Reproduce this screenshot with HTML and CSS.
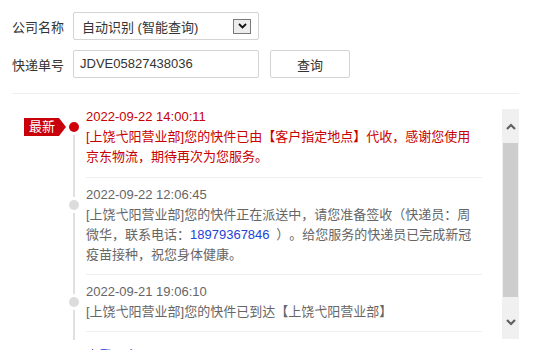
FILE: index.html
```html
<!DOCTYPE html>
<html lang="zh">
<head>
<meta charset="utf-8">
<link rel="stylesheet" href="styles.css">
</head>
<body>
<div class="page">
  <div class="form">
    <div class="row">
      <span class="label">公司名称</span>
      <div class="select">
        <span class="select-text">自动识别 (智能查询)</span>
        <span class="select-arrow"><svg width="9" height="6" viewBox="0 0 9 6"><path d="M1 1 L4.5 4.5 L8 1" fill="none" stroke="#111" stroke-width="1.8"/></svg></span>
      </div>
    </div>
    <div class="row">
      <span class="label">快递单号</span>
      <div class="input">JDVE05827438036</div>
      <button class="btn">查询</button>
    </div>
  </div>
  <div class="divider"></div>
  <div class="track-wrap">
    <div class="list">
      <div class="item latest">
        <span class="badge">最新</span>
        <span class="dot"></span>
        <div class="time">2022-09-22 14:00:11</div>
        <div class="desc">[上饶弋阳营业部]您的快件已由【客户指定地点】代收，感谢您使用京东物流，期待再次为您服务。</div>
      </div>
      <div class="item">
        <span class="dot"></span>
        <div class="time">2022-09-22 12:06:45</div>
        <div class="desc">[上饶弋阳营业部]您的快件正在派送中，请您准备签收（快递员：周微华，联系电话：<span class="phone">18979367846</span> ）。给您服务的快递员已完成新冠疫苗接种，祝您身体健康。</div>
      </div>
      <div class="item">
        <span class="dot"></span>
        <div class="time">2022-09-21 19:06:10</div>
        <div class="desc">[上饶弋阳营业部]您的快件已到达【上饶弋阳营业部】</div>
      </div>
      <div class="item">
        <span class="dot"></span>
        <div class="time">2022-09-21 16:40:22</div>
        <div class="desc">[上饶中转场]您的快件已发车</div>
      </div>
    </div>
    <div class="scrollbar">
      <span class="sb-btn"><svg width="10" height="7" viewBox="0 0 10 7"><path d="M1 6 L5 2 L9 6" fill="none" stroke="#606060" stroke-width="2.2"/></svg></span>
      <span class="sb-thumb"></span>
      <span class="sb-space-bottom"></span>
      <span class="sb-btn"><svg width="10" height="7" viewBox="0 0 10 7"><path d="M1 1 L5 5 L9 1" fill="none" stroke="#606060" stroke-width="2.2"/></svg></span>
    </div>
  </div>
  <a class="more">查看更多</a>
</div>
</body>
</html>
```

FILE: styles.css
```css
* { box-sizing: border-box; }
body {
  margin: 0;
  background: #fff;
  font-family: "Liberation Sans", Arial, "Noto Sans CJK SC", sans-serif;
  font-size: 13px;
  color: #333;
  text-spacing-trim: space-all;
}
.page {
  padding: 12px 15px 0 12px;
}
.form {
  display: flex;
  flex-direction: column;
  gap: 10px;
}
.row {
  display: flex;
  align-items: center;
  height: 28px;
}
.label {
  width: 61px;
  color: #333;
}
.select {
  width: 186px;
  height: 28px;
  border: 1px solid #d4d4d4;
  border-radius: 2px;
  display: flex;
  align-items: center;
  justify-content: space-between;
  padding: 0 7px 0 8px;
  color: #333;
}
.select-arrow {
  width: 18px;
  height: 15px;
  border: 1px solid #7a7a7a;
  background: #ececec;
  display: flex;
  align-items: center;
  justify-content: center;
}
.input {
  width: 186px;
  height: 28px;
  border: 1px solid #d4d4d4;
  border-radius: 2px;
  padding: 0 6px;
  line-height: 26px;
  color: #333;
}
.btn {
  margin-left: 11px;
  width: 80px;
  height: 28px;
  border: 1px solid #d4d4d4;
  border-radius: 2px;
  background: #fff;
  font: inherit;
  color: #333;
  padding: 0;
}
.divider {
  margin-top: 15px;
  height: 1px;
  background: #eeeeee;
}
.track-wrap {
  margin-top: 6px;
  height: 240px;
  display: flex;
  overflow: hidden;
}
.list {
  position: relative;
  width: 470px;
  padding-left: 74px;
}
.list::before {
  content: "";
  position: absolute;
  left: 61px;
  top: 28px;
  bottom: 0;
  width: 2px;
  background: #e0e0e0;
}
.item {
  position: relative;
  padding: 7px 0 9px;
  border-bottom: 1px solid #eeeeee;
  line-height: 20px;
  color: #666;
}
.desc {
  padding-right: 6px;
}
.item.latest {
  color: #c80000;
  padding-bottom: 10px;
}
.dot {
  position: absolute;
  left: -17px;
  top: 22px;
  width: 10px;
  height: 10px;
  border-radius: 50%;
  background: #dcdcdc;
  box-shadow: 0 0 0 3px #fff;
}
.latest .dot {
  background: #d0000a;
}
.badge {
  position: absolute;
  left: -62px;
  top: 18px;
  height: 18px;
  line-height: 18px;
  padding: 0 4px 0 5px;
  background: #c8000a;
  color: #fff;
  font-size: 13px;
}
.badge::after {
  content: "";
  position: absolute;
  right: -7px;
  top: 0;
  border-left: 7px solid #c8000a;
  border-top: 9px solid transparent;
  border-bottom: 9px solid transparent;
}
.phone {
  color: #2442d6;
  margin-right: 3px;
}
.scrollbar {
  margin-left: 20px;
  margin-top: 9px;
  width: 17px;
  height: 230px;
  background: #f0f0f0;
  display: flex;
  flex-direction: column;
  align-items: stretch;
}
.sb-btn {
  height: 34px;
  display: flex;
  align-items: center;
  justify-content: center;
  flex: none;
}
.sb-thumb {
  flex: 1;
  background: #cdcdcd;
  margin: 0 1px;
}
.sb-space-bottom { height: 8px; flex: none; }
.more {
  display: block;
  margin-top: 6px;
  margin-left: 74px;
  color: #2442d6;
  line-height: 20px;
}
```
